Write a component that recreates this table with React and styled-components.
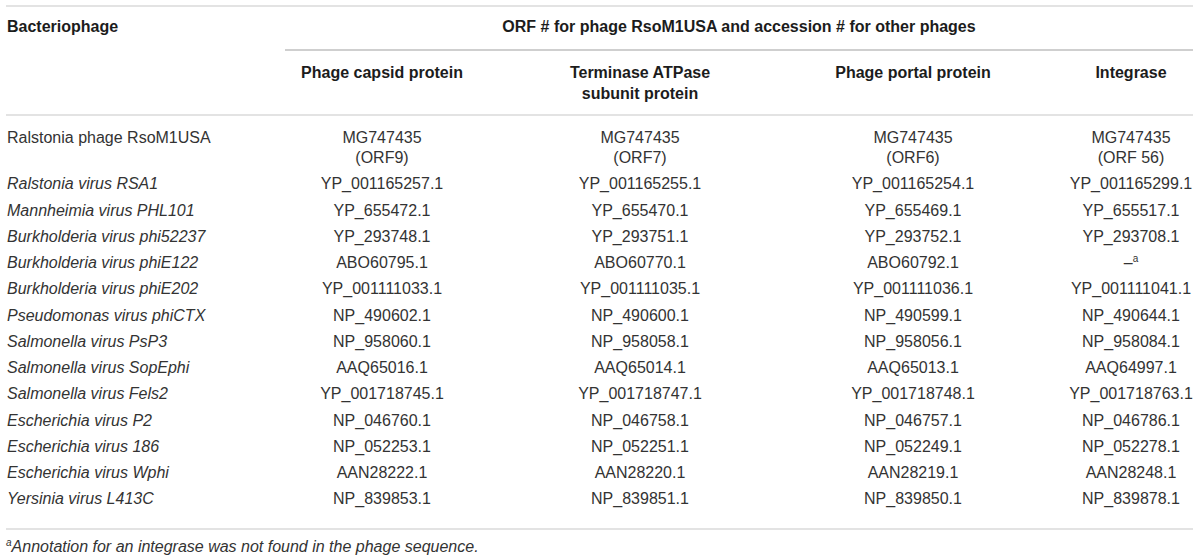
import React from "react";
import styled, { createGlobalStyle } from "styled-components";

const GlobalStyle = createGlobalStyle`
  html, body { margin: 0; padding: 0; background: #fff; }
  body { font-family: "Liberation Sans", Arial, Helvetica, sans-serif; }
`;

const COLS = "279px 194px 322px 224px 168px";

const Page = styled.div`
  padding: 5px 7px 0 6px;
  width: 1187px;
`;

const Table = styled.div`
  border-top: 2px solid #e3e3e3;
  border-bottom: 2px solid #e3e3e3;
`;

const Head = styled.div`
  display: grid;
  grid-template-columns: ${COLS};
  grid-template-rows: auto auto;
  border-bottom: 2px solid #e3e3e3;
  font-weight: 700;
  font-size: 16px;
  line-height: 21px;
  color: #1c1c1c;
`;

const CornerCell = styled.div`
  grid-row: 1 / 3;
  grid-column: 1;
  padding: 9px 0 0 1px;
`;

const SpanCell = styled.div`
  grid-row: 1;
  grid-column: 2 / 6;
  text-align: center;
  padding: 9px 0 12px;
  border-bottom: 2px solid #cfcfcf;
`;

const SubCell = styled.div`
  grid-row: 2;
  text-align: center;
  padding: 11px 0 10px ${(p) => (p.$last ? "44px" : "0")};
`;

const Body = styled.div`
  padding: 9px 0 15px;
  font-size: 16px;
  line-height: 20px;
  color: #333;
`;

const Row = styled.div`
  display: grid;
  grid-template-columns: ${COLS};
  padding: 3px 0 3.25px;
  & > :last-child {
    padding-left: 44px;
  }
`;

const Name = styled.div`
  padding-left: 1px;
  font-style: ${(p) => (p.$italic ? "italic" : "normal")};
  white-space: nowrap;
`;

const Value = styled.div`
  text-align: center;
  white-space: nowrap;
`;

const Sup = styled.sup`
  font-size: 10px;
  line-height: 0;
  vertical-align: 6px;
`;

const Footnote = styled.div`
  padding-top: 7px;
  font-size: 16px;
  line-height: 20px;
  font-style: italic;
  color: #333;
`;

const rows = [
  ["Ralstonia virus RSA1", "YP_001165257.1", "YP_001165255.1", "YP_001165254.1", "YP_001165299.1"],
  ["Mannheimia virus PHL101", "YP_655472.1", "YP_655470.1", "YP_655469.1", "YP_655517.1"],
  ["Burkholderia virus phi52237", "YP_293748.1", "YP_293751.1", "YP_293752.1", "YP_293708.1"],
  ["Burkholderia virus phiE122", "ABO60795.1", "ABO60770.1", "ABO60792.1", null],
  ["Burkholderia virus phiE202", "YP_001111033.1", "YP_001111035.1", "YP_001111036.1", "YP_001111041.1"],
  ["Pseudomonas virus phiCTX", "NP_490602.1", "NP_490600.1", "NP_490599.1", "NP_490644.1"],
  ["Salmonella virus PsP3", "NP_958060.1", "NP_958058.1", "NP_958056.1", "NP_958084.1"],
  ["Salmonella virus SopEphi", "AAQ65016.1", "AAQ65014.1", "AAQ65013.1", "AAQ64997.1"],
  ["Salmonella virus Fels2", "YP_001718745.1", "YP_001718747.1", "YP_001718748.1", "YP_001718763.1"],
  ["Escherichia virus P2", "NP_046760.1", "NP_046758.1", "NP_046757.1", "NP_046786.1"],
  ["Escherichia virus 186", "NP_052253.1", "NP_052251.1", "NP_052249.1", "NP_052278.1"],
  ["Escherichia virus Wphi", "AAN28222.1", "AAN28220.1", "AAN28219.1", "AAN28248.1"],
  ["Yersinia virus L413C", "NP_839853.1", "NP_839851.1", "NP_839850.1", "NP_839878.1"],
];

export default function App() {
  return (
    <>
      <GlobalStyle />
      <Page>
        <Table>
          <Head>
            <CornerCell>Bacteriophage</CornerCell>
            <SpanCell>ORF # for phage RsoM1USA and accession # for other phages</SpanCell>
            <SubCell>Phage capsid protein</SubCell>
            <SubCell>
              Terminase ATPase
              <br />
              subunit protein
            </SubCell>
            <SubCell>Phage portal protein</SubCell>
            <SubCell $last>Integrase</SubCell>
          </Head>
          <Body>
            <Row>
              <Name>Ralstonia phage RsoM1USA</Name>
              <Value>MG747435<br />(ORF9)</Value>
              <Value>MG747435<br />(ORF7)</Value>
              <Value>MG747435<br />(ORF6)</Value>
              <Value>MG747435<br />(ORF 56)</Value>
            </Row>
            {rows.map((r) => (
              <Row key={r[0]}>
                <Name $italic>{r[0]}</Name>
                <Value>{r[1]}</Value>
                <Value>{r[2]}</Value>
                <Value>{r[3]}</Value>
                <Value>
                  {r[4] === null ? (
                    <>
                      –<Sup>a</Sup>
                    </>
                  ) : (
                    r[4]
                  )}
                </Value>
              </Row>
            ))}
          </Body>
        </Table>
        <Footnote>
          <Sup>a</Sup>Annotation for an integrase was not found in the phage sequence.
        </Footnote>
      </Page>
    </>
  );
}
